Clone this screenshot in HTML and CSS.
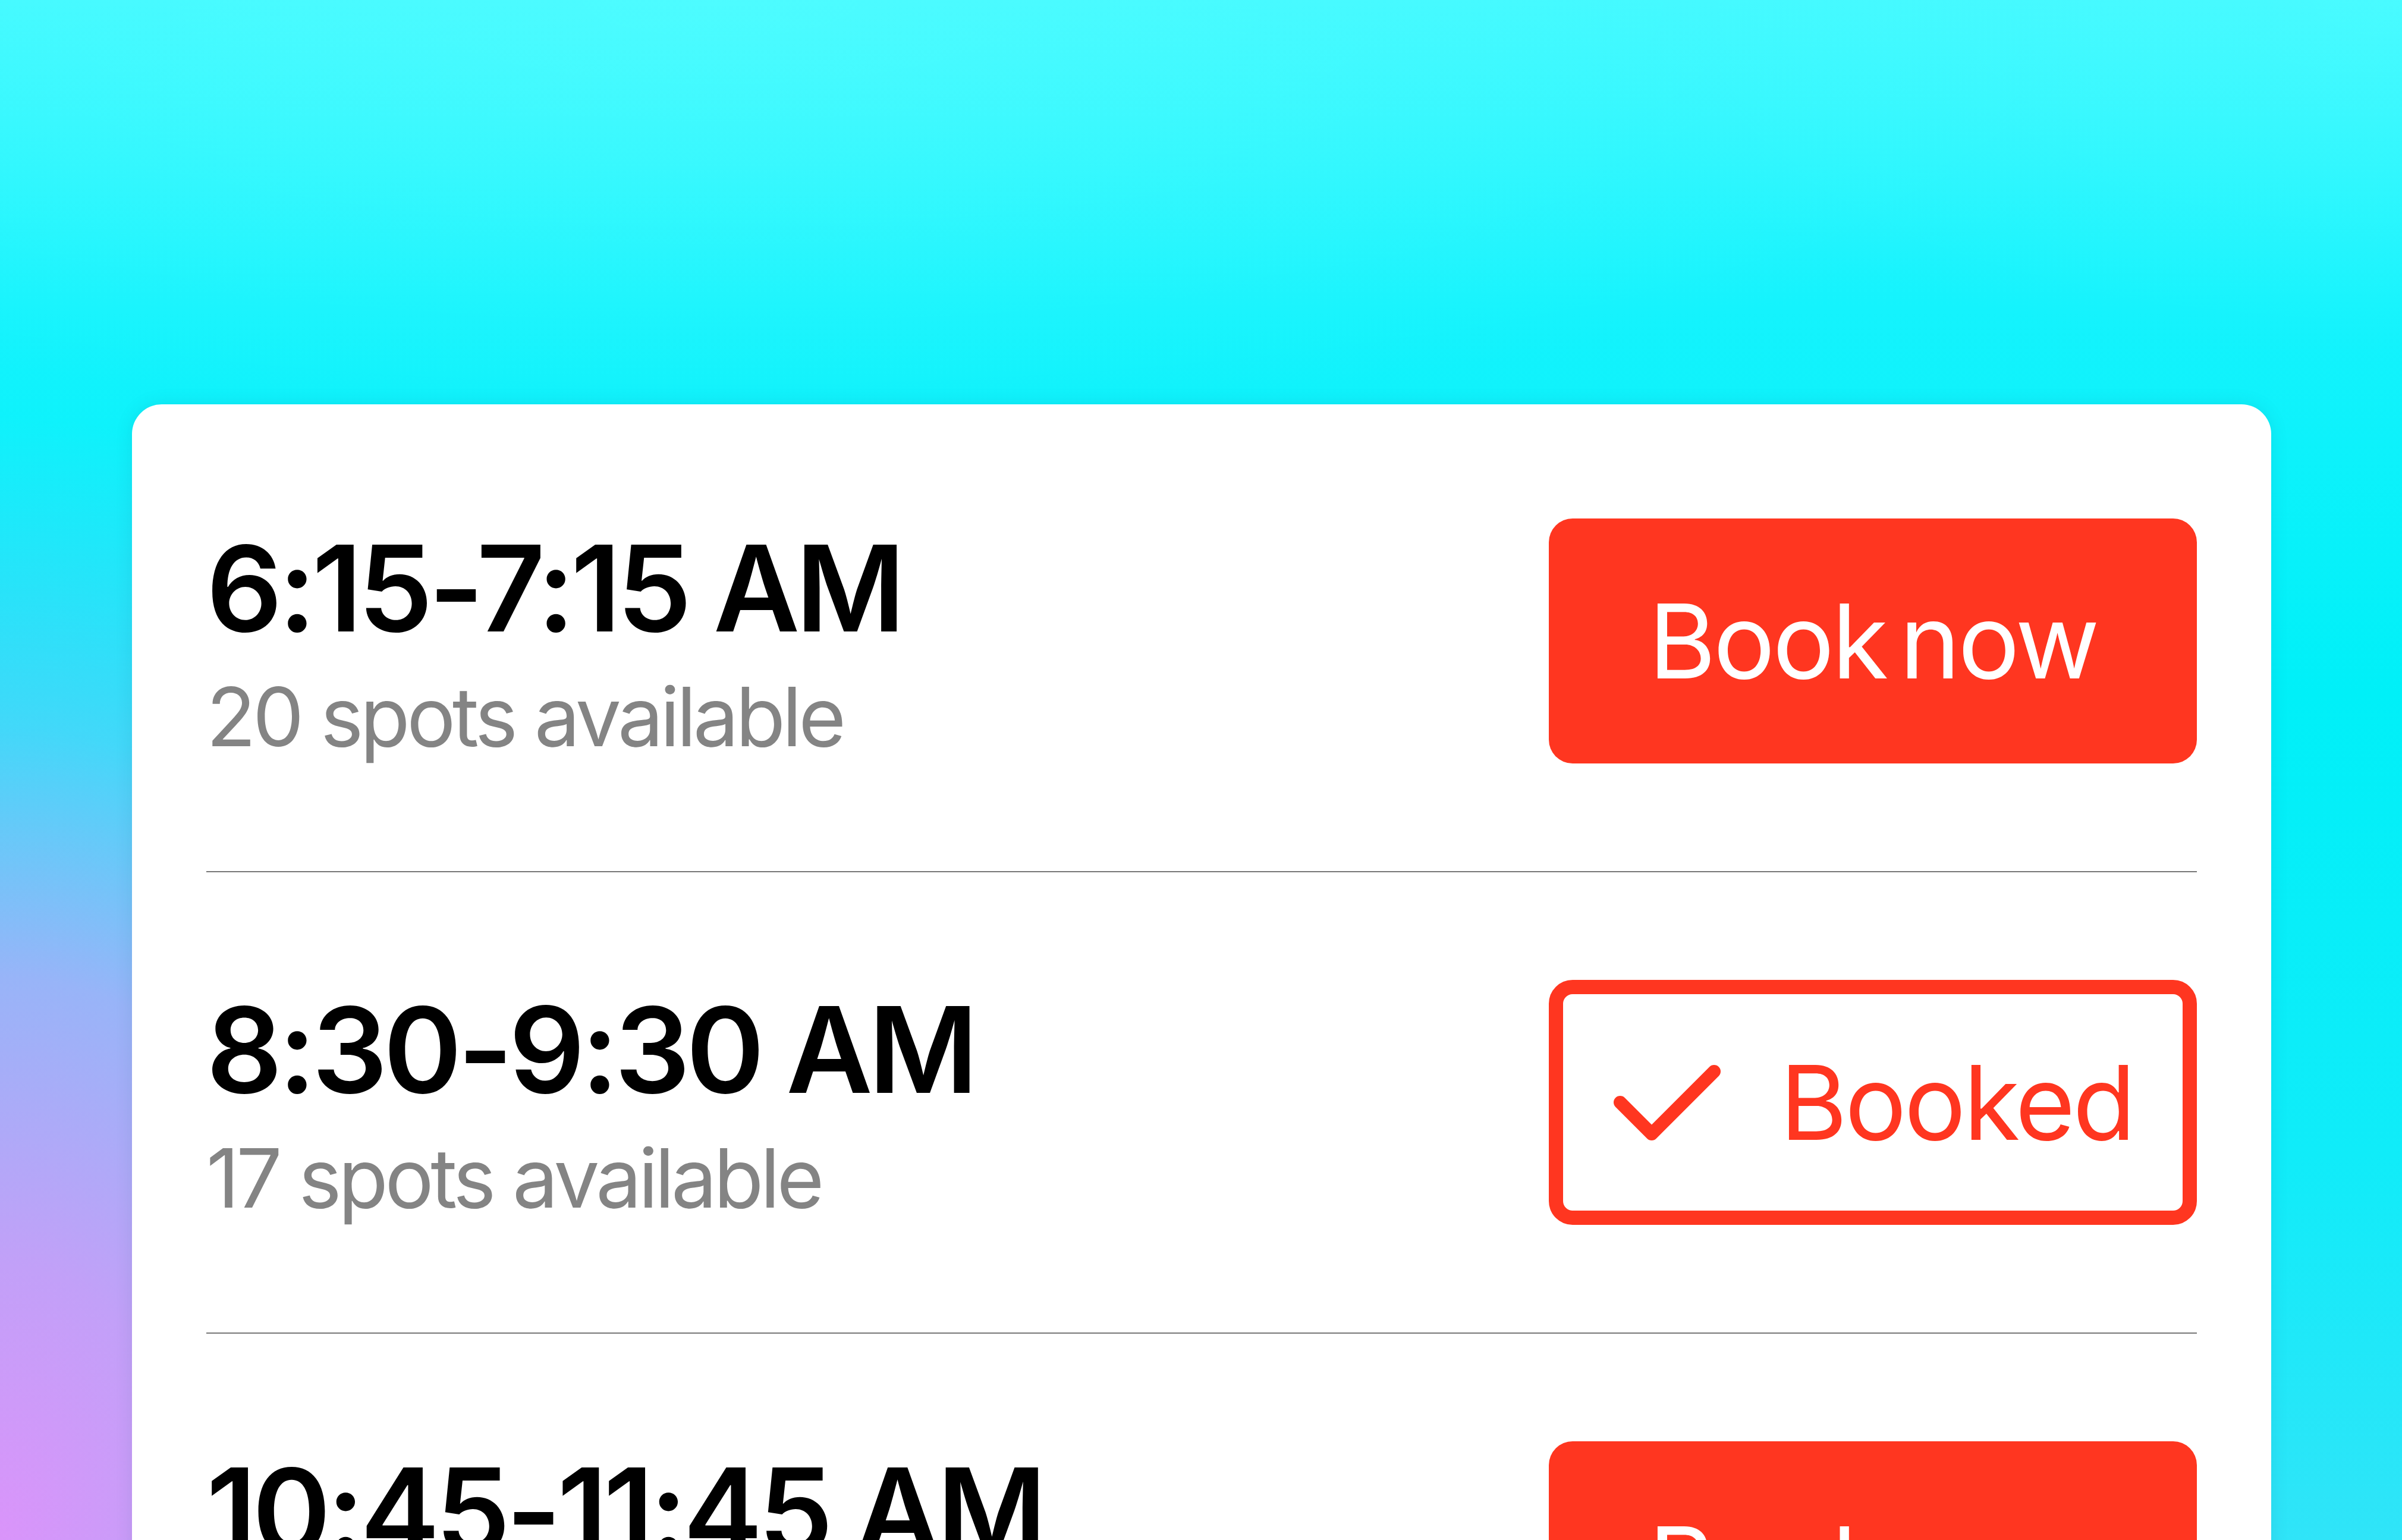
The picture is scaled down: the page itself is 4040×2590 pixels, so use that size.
FILE: index.html
```html
<!DOCTYPE html>
<html lang="en">
<head>
<meta charset="utf-8">
<title>Class schedule</title>
<link rel="stylesheet" href="styles.css">
</head>
<body>
  <main class="card">
    <div class="row">
      <div class="info">
        <div class="time">6:15-7:15 AM</div>
        <div class="spots">20 spots available</div>
      </div>
      <button class="btn btn-book">Book now</button>
    </div>
    <div class="row">
      <div class="info">
        <div class="time">8:30-9:30 AM</div>
        <div class="spots">17 spots available</div>
      </div>
      <button class="btn btn-booked">
        <svg class="check" width="184" height="131" viewBox="0 0 184 131" aria-hidden="true">
          <path d="M13 65 L66 118 L171 13" fill="none" stroke="#ff3620" stroke-width="22" stroke-linecap="round" stroke-linejoin="round"/>
        </svg>
        <span>Booked</span>
      </button>
    </div>
    <div class="row">
      <div class="info">
        <div class="time">10:45-11:45 AM</div>
        <div class="spots">12 spots available</div>
      </div>
      <button class="btn btn-book">Book now</button>
    </div>
  </main>
</body>
</html>
```
FILE: styles.css
```css
html, body {
  margin: 0;
  padding: 0;
}

body {
  width: 4040px;
  height: 2590px;
  overflow: hidden;
  font-family: "Inter", "Noto Sans", "Liberation Sans", sans-serif;
  background:
    radial-gradient(ellipse 1500px 2100px at 0% 100%, #da94fa 0%, #c2a0f8 22%, #98b4f8 45%, rgba(110, 200, 250, 0.6) 65%, rgba(80, 220, 250, 0) 90%),
    radial-gradient(ellipse 2600px 700px at 30% 0%, rgba(90, 255, 255, 0.55) 0%, rgba(90, 255, 255, 0) 100%),
    radial-gradient(ellipse 1400px 600px at 100% 0%, rgba(90, 255, 255, 0.4) 0%, rgba(90, 255, 255, 0) 100%),
    linear-gradient(180deg, #3ef8ff 0%, #14f3fd 20%, #00f0f8 45%, #10ecf9 75%, #30e4f8 100%);
}

.card {
  box-sizing: border-box;
  width: 3598px;
  min-height: 2100px;
  margin: 680px 0 0 222px;
  padding: 11px 125px 0;
  background: #ffffff;
  border-radius: 50px;
  box-shadow: 0 0 30px rgba(0, 60, 90, 0.10);
}

.row {
  display: flex;
  align-items: center;
  justify-content: space-between;
  padding: 178px 0;
  border-bottom: 2px solid #777777;
}

.info {
  display: flex;
  flex-direction: column;
  gap: 14px;
}

.time {
  font-size: 200px;
  line-height: 240px;
  font-weight: 600;
  color: #000000;
  letter-spacing: -7px;
}

.spots {
  font-size: 137px;
  line-height: 164px;
  font-weight: 400;
  color: #848484;
  letter-spacing: -5.5px;
}

.btn {
  box-sizing: border-box;
  width: 1090px;
  height: 412px;
  border-radius: 40px;
  display: inline-flex;
  align-items: center;
  justify-content: center;
  gap: 98px;
  font-family: inherit;
  font-size: 173px;
  font-weight: 400;
  letter-spacing: -4px;
  padding: 0;
  margin: 0;
}

.btn-book {
  background: #ff3620;
  border: none;
  color: #ffffff;
  word-spacing: -22px;
}

.btn-booked {
  background: #ffffff;
  border: 24px solid #ff3620;
  color: #ff3620;
}

.check {
  display: block;
  flex: none;
}
```
